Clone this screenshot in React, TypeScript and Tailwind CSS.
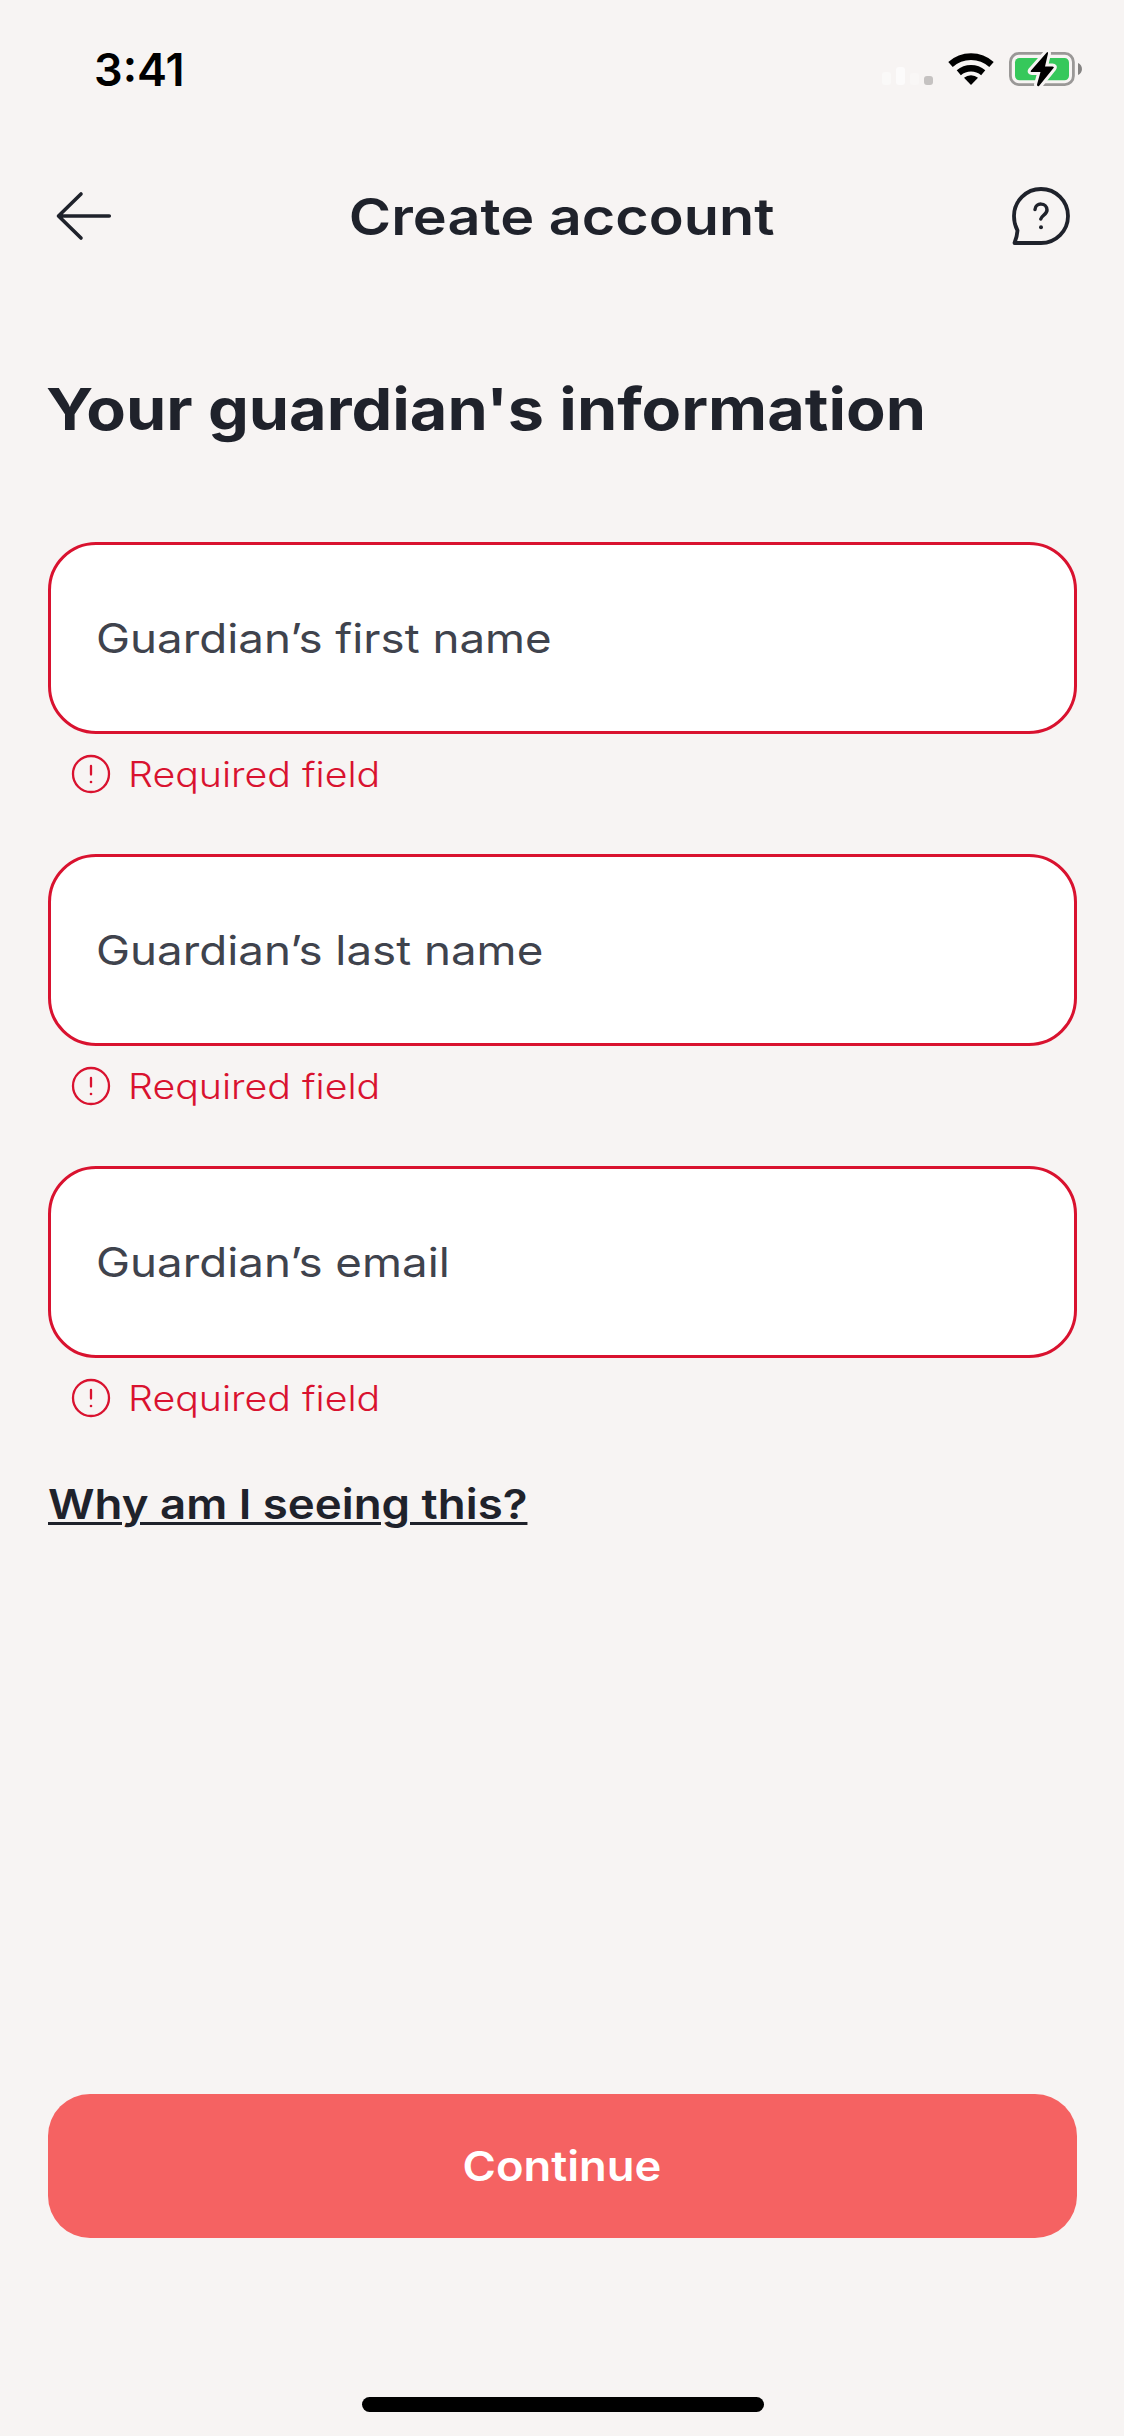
const FIELDS = ["Guardian’s first name", "Guardian’s last name", "Guardian’s email"];

function StatusBar() {
  return (
    <div className="flex h-[138px] shrink-0 items-center justify-between pr-[40px] pl-[94px]">
      <span className="text-[45px] leading-none font-semibold text-black">3:41</span>
      <svg width="204" height="38" viewBox="880 50 204 38" fill="none">
        <rect x="882" y="72" width="9" height="13" rx="3" fill="#faf9f8" />
        <rect x="896" y="67" width="9" height="18" rx="3" fill="#fcfbfb" />
        <rect x="910" y="73" width="9" height="12" rx="3" fill="#f9f7f6" />
        <rect x="924" y="76" width="9" height="9" rx="3" fill="#c5c2c1" />
        <path d="M950.5 64.5a30.5 30.5 0 0 1 41 0" stroke="#000" strokeWidth="6.6" />
        <path d="M958.8 72.8a18.8 18.8 0 0 1 24.4 0" stroke="#000" strokeWidth="6.4" />
        <path d="M971 85l-7-7.2a10.6 10.6 0 0 1 14 0z" fill="#000" />
        <rect x="1010.4" y="53.4" width="63" height="31.2" rx="8.5" stroke="#9a9897" strokeWidth="2.8" />
        <rect x="1015" y="58" width="54" height="22.3" rx="4.5" fill="#36c85b" />
        <path d="M1078 63c5.300 2 5.300 10 0 12z" fill="#858382" />
        <path
          d="M1047 52.300L1031 70.500q-1 1.500 1 1.500h8.500L1037 84.500q0 2.500 2 1.500L1053.500 68q1-1.600-1-1.600H1045L1048 53.500q0-2-1-1.200z"
          fill="#000"
          stroke="#f7f4f3"
          strokeWidth="6"
          strokeLinejoin="round"
          paintOrder="stroke"
        />
      </svg>
    </div>
  );
}

function Header() {
  return (
    <header className="flex h-[156px] shrink-0 items-center justify-between px-[48px]">
      <svg width="72" height="72" viewBox="48 180 72 72" fill="none" stroke="#1f222b" strokeWidth="3.600" strokeLinecap="round" strokeLinejoin="round">
        <path d="M109.300 216H58.500M81 194L58.500 216L81 238" />
      </svg>
      <h1 className="scale-x-[1.128] text-[51px] leading-none font-[560] whitespace-nowrap">Create account</h1>
      <svg width="72" height="72" viewBox="1004 180 72 72" fill="none" stroke="#1f222b" strokeWidth="3.800" strokeLinecap="round" strokeLinejoin="round">
        <path d="M1041 243H1014.500Q1017 237 1017.500 230.500Q1014 224 1014 216A27 27 0 1 1 1041 243Z" />
        <path d="M1035 209.500C1035.500 202 1047 202.500 1047 210C1047 214.500 1041.500 215.500 1040.800 219" strokeWidth="3.500" />
        <circle cx="1041" cy="227.200" r="2" fill="#1f222b" stroke="none" />
      </svg>
    </header>
  );
}

function Field({ label }: { label: string }) {
  return (
    <div>
      <div className="flex h-[192px] items-center rounded-[48px] border-[3px] border-[#d9122f] bg-white px-[45px] pt-[2px] text-[40.5px] text-[#3f434d]">
        <span className="origin-left scale-x-[1.128]">{label}</span>
      </div>
      <div className="flex h-[80px] items-center gap-[17px] pl-[23px] text-[#d9122f]">
        <svg width="40" height="40" viewBox="0 0 40 40" fill="none" stroke="currentColor" strokeWidth="2.300" strokeLinecap="round">
          <circle cx="20" cy="20" r="18" />
          <path d="M20 12v8.500" />
          <circle cx="20" cy="28" r="1.300" fill="currentColor" stroke="none" />
        </svg>
        <span className="origin-left scale-x-[1.122] text-[35px] leading-none font-[360]">Required field</span>
      </div>
    </div>
  );
}

export default function App() {
  return (
    <div className="flex h-[2436px] w-[1124px] flex-col overflow-hidden bg-[#f7f4f3] font-['Inter',sans-serif] text-[#1f222b]">
      <StatusBar />
      <Header />
      <main className="flex flex-col pr-[47px] pl-[48px]">
        <h2 className="-ml-[2px] flex h-[248px] origin-left scale-x-[1.116] items-center pb-[18px] text-[58px] leading-none font-bold whitespace-nowrap">
          Your guardian's information
        </h2>
        <div className="flex flex-col gap-[40px]">
          {FIELDS.map((label) => (
            <Field key={label} label={label} />
          ))}
        </div>
        <a className="flex h-[132px] origin-left scale-x-[1.112] items-center pt-[2px] text-[41px] font-semibold underline decoration-[3px] underline-offset-[3px]">
          Why am I seeing this?
        </a>
        <button className="mt-[524px] flex h-[144px] items-center justify-center rounded-[42px] bg-[#f56262] pt-[2px] pr-[2px] text-[41px] font-semibold text-white">
          <span className="scale-x-[1.105]">Continue</span>
        </button>
      </main>
      <div className="ml-[362px] mt-[159px] h-[15px] w-[402px] shrink-0 rounded-full bg-black" />
    </div>
  );
}
